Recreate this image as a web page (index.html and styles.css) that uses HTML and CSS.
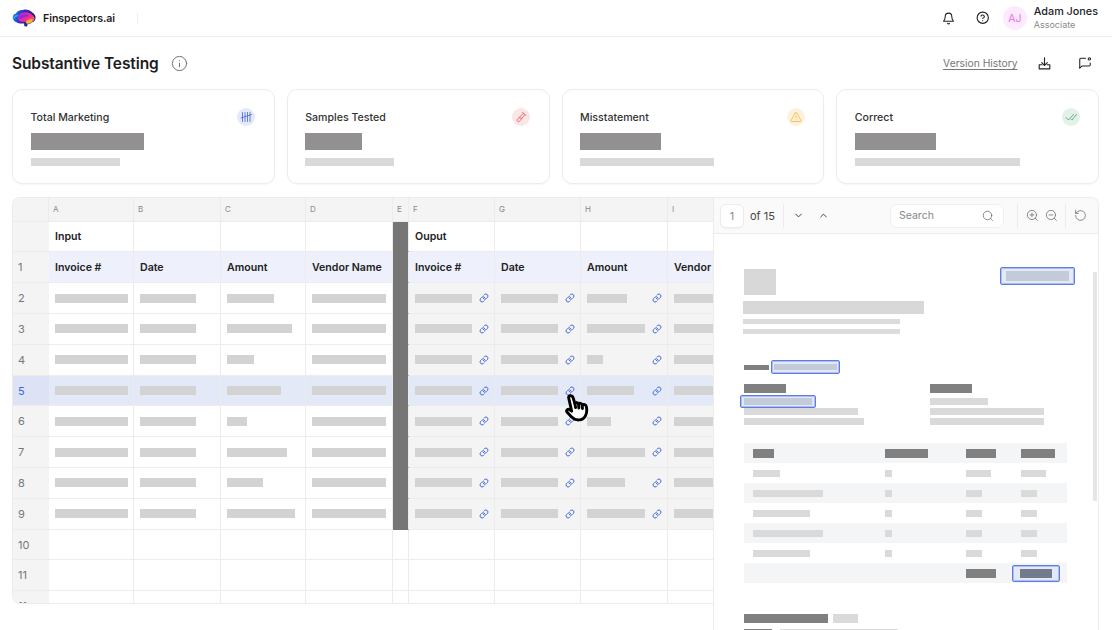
FILE: index.html
```html
<!DOCTYPE html>
<html lang="en">
<head>
<meta charset="utf-8">
<title>Substantive Testing</title>
<link rel="stylesheet" href="styles.css">
</head>
<body>
<svg class="sprite" aria-hidden="true">
  <symbol id="link" viewBox="0 0 24 24"><path d="M10 13a5 5 0 0 0 7.5.5l3-3a5 5 0 0 0-7-7l-1.7 1.7"/><path d="M14 11a5 5 0 0 0-7.5-.5l-3 3a5 5 0 0 0 7 7l1.7-1.7"/></symbol>
</svg>
<header class="topbar">
  <svg class="logo" viewBox="0 0 24 18" aria-hidden="true">
    <defs>
      <linearGradient id="lg1" x1="0" y1="0" x2="1" y2="0.3"><stop offset="0" stop-color="#1f8cf0"/><stop offset=".45" stop-color="#3a2fc4"/><stop offset="1" stop-color="#241a6e"/></linearGradient>
      <linearGradient id="lg2" x1="0" y1="0" x2="1" y2="1"><stop offset="0" stop-color="#c026d3"/><stop offset=".55" stop-color="#f0279a"/><stop offset="1" stop-color="#f79a1e"/></linearGradient>
    </defs>
    <path fill="url(#lg1)" d="M1 9.5C.2 7 2 5 4 4.6 5 2 8 .6 11 1c3-1 7 0 9 2.200 2.500 1.300 4 3.800 3.500 6.300-.4 2.200-2 3.500-4 4-.8 1.300-2.500 1.800-4 1.700l-.4 2.200-2.700-.2-.4-2.600C9 14.600 6 14.400 4.500 13.200 2.800 13 1.500 11.500 1 9.500Z"/>
    <path fill="url(#lg2)" d="M7 6.500C9 3.500 14 2.500 17.500 4c2.500 1 4.500 3 5.200 5.500-.6 2.300-2.200 3.600-4.200 4-1.600-.6-3-1-5-.8-2.500.3-5 .2-6.500-1.200C6 10 6 8 7 6.500Z"/>
    <path fill="#7c2fe0" d="M7.500 8c2-2.500 5.500-3 8-2 1.200.5.800 1.500-.2 1.500-2.300-.3-4.300.4-5.800 2-.8 1.200-2.800-.3-2-1.500Z"/>
    <path fill="#f9b233" d="M14 13c1-2 3.500-3 6-2.500.8.300.5 1-.3 2.400-.8 1.300-2.500 1.900-4.200 1.800-1 0-2-.8-1.500-1.700Z"/>
    <path fill="#18a5f5" d="M1.200 8.500C2 6.500 4 5.500 6 6c.8.300.4 1.300-.4 1.400-1.600.2-2.400 1-3 2.300-.4.600-1.600-.4-1.400-1.200Z"/>
  </svg>
  <span class="brand">Finspectors.ai</span>
  <span class="brand-rule"></span>
  <div class="top-actions">
    <svg class="ico ico-bell" viewBox="0 0 24 24"><path d="M6 8a6 6 0 0 1 12 0c0 7 3 8 3 9H3c0-1 3-2 3-9"/><path d="M10.300 21a2 2 0 0 0 3.400 0"/></svg>
    <svg class="ico ico-help" viewBox="0 0 24 24"><circle cx="12" cy="12" r="10"/><path d="M9 9a3 3 0 0 1 5.800 1c0 2-3 3-3 3"/><path d="M12 17h.01"/></svg>
    <div class="avatar">AJ</div>
    <div class="user">
      <div class="user-name">Adam Jones</div>
      <div class="user-role">Associate</div>
    </div>
  </div>
</header>

<main class="page">
  <div class="title-row">
    <h1 class="title">Substantive Testing</h1>
    <svg class="ico ico-info" viewBox="0 0 24 24"><circle cx="12" cy="12" r="10"/><path d="M12 16.500v-5"/><path d="M12 8h.01"/></svg>
    <a class="history">Version History</a>
    <svg class="ico ico-dl" viewBox="0 0 24 24"><path d="M12 3v12"/><path d="m7.500 10.500 4.500 4.500 4.500-4.500"/><path d="M8 14H3.500v6.500h17V14H16"/></svg>
    <svg class="ico ico-msg" viewBox="0 0 24 24"><path d="M13 4H5a2 2 0 0 0-2 2v15l4-4h12a2 2 0 0 0 2-2v-3"/><circle cx="19.500" cy="5" r="2"/></svg>
  </div>

  <section class="cards">
    <article class="card">
      <div class="card-top"><span class="card-label">Total Marketing</span>
        <span class="badge badge-blue"><svg viewBox="0 0 24 24"><path d="M5 3v18M10 3v18M15 3v18M20 3v18M2 14 23 7"/></svg></span></div>
      <div class="val" style="width:113px"></div><div class="sub" style="width:89px"></div>
    </article>
    <article class="card">
      <div class="card-top"><span class="card-label">Samples Tested</span>
        <span class="badge badge-red"><svg viewBox="0 0 24 24"><path d="m15 2.500 6.500 6.500"/><path d="M17 4.500 4.500 17a3 3 0 0 0 4 4L19.500 7.500"/><path d="m8.500 13 5 2"/></svg></span></div>
      <div class="val" style="width:57px"></div><div class="sub" style="width:89px"></div>
    </article>
    <article class="card">
      <div class="card-top"><span class="card-label">Misstatement</span>
        <span class="badge badge-yellow"><svg viewBox="0 0 24 24"><path d="M10.300 4 2.500 18a2 2 0 0 0 1.700 3h15.600a2 2 0 0 0 1.700-3L13.700 4a2 2 0 0 0-3.400 0Z"/><path d="M12 9.500v4.500"/><path d="M12 17.500h.01"/></svg></span></div>
      <div class="val" style="width:81px"></div><div class="sub" style="width:134px"></div>
    </article>
    <article class="card">
      <div class="card-top"><span class="card-label">Correct</span>
        <span class="badge badge-green"><svg viewBox="0 0 24 24"><path d="m2 13 5 5L17 7"/><path d="m13 17 1 1L23 7"/></svg></span></div>
      <div class="val" style="width:81px"></div><div class="sub" style="width:165px"></div>
    </article>
  </section>

  <section class="work">
    <div class="sheet">
      <div class="grid">
        <div class="c ch"></div><div class="c ch">A</div><div class="c ch">B</div><div class="c ch">C</div><div class="c ch">D</div><div class="c ch">E</div><div class="c ch">F</div><div class="c ch">G</div><div class="c ch">H</div><div class="c ch">I</div>

        <div class="c rh"></div><div class="c b">Input</div><div class="c"></div><div class="c"></div><div class="c"></div><div class="c dark"></div><div class="c b">Ouput</div><div class="c"></div><div class="c"></div><div class="c"></div>

        <div class="c rh">1</div><div class="c b hd">Invoice #</div><div class="c b hd">Date</div><div class="c b hd">Amount</div><div class="c b hd">Vendor Name</div><div class="c dark"></div><div class="c b hd">Invoice #</div><div class="c b hd">Date</div><div class="c b hd">Amount</div><div class="c b hd">Vendor Name</div>

        <div class="c rh">2</div><div class="c"><span class="sk" style="width:73px"></span></div><div class="c"><span class="sk" style="width:56px"></span></div><div class="c"><span class="sk" style="width:47px"></span></div><div class="c"><span class="sk" style="width:74px"></span></div><div class="c dark"></div><div class="c out"><span class="sk" style="width:57px"></span><svg class="lk"><use href="#link"/></svg></div><div class="c out"><span class="sk" style="width:57px"></span><svg class="lk"><use href="#link"/></svg></div><div class="c out"><span class="sk" style="width:40px"></span><svg class="lk"><use href="#link"/></svg></div><div class="c out"><span class="sk" style="width:74px"></span></div>

        <div class="c rh">3</div><div class="c"><span class="sk" style="width:73px"></span></div><div class="c"><span class="sk" style="width:56px"></span></div><div class="c"><span class="sk" style="width:65px"></span></div><div class="c"><span class="sk" style="width:74px"></span></div><div class="c dark"></div><div class="c out"><span class="sk" style="width:57px"></span><svg class="lk"><use href="#link"/></svg></div><div class="c out"><span class="sk" style="width:57px"></span><svg class="lk"><use href="#link"/></svg></div><div class="c out"><span class="sk" style="width:58px"></span><svg class="lk"><use href="#link"/></svg></div><div class="c out"><span class="sk" style="width:74px"></span></div>

        <div class="c rh">4</div><div class="c"><span class="sk" style="width:73px"></span></div><div class="c"><span class="sk" style="width:56px"></span></div><div class="c"><span class="sk" style="width:27px"></span></div><div class="c"><span class="sk" style="width:74px"></span></div><div class="c dark"></div><div class="c out"><span class="sk" style="width:57px"></span><svg class="lk"><use href="#link"/></svg></div><div class="c out"><span class="sk" style="width:57px"></span><svg class="lk"><use href="#link"/></svg></div><div class="c out"><span class="sk" style="width:16px"></span><svg class="lk"><use href="#link"/></svg></div><div class="c out"><span class="sk" style="width:74px"></span></div>

        <div class="c rh sel-h">5</div><div class="c sel"><span class="sk" style="width:73px"></span></div><div class="c sel"><span class="sk" style="width:56px"></span></div><div class="c sel"><span class="sk" style="width:54px"></span></div><div class="c sel"><span class="sk" style="width:74px"></span></div><div class="c dark"></div><div class="c out sel"><span class="sk" style="width:57px"></span><svg class="lk"><use href="#link"/></svg></div><div class="c out sel"><span class="sk" style="width:57px"></span><svg class="lk"><use href="#link"/></svg></div><div class="c out sel"><span class="sk" style="width:47px"></span><svg class="lk"><use href="#link"/></svg></div><div class="c out sel"><span class="sk" style="width:74px"></span></div>

        <div class="c rh">6</div><div class="c"><span class="sk" style="width:73px"></span></div><div class="c"><span class="sk" style="width:56px"></span></div><div class="c"><span class="sk" style="width:20px"></span></div><div class="c"><span class="sk" style="width:74px"></span></div><div class="c dark"></div><div class="c out"><span class="sk" style="width:57px"></span><svg class="lk"><use href="#link"/></svg></div><div class="c out"><span class="sk" style="width:57px"></span><svg class="lk"><use href="#link"/></svg></div><div class="c out"><span class="sk" style="width:24px"></span><svg class="lk"><use href="#link"/></svg></div><div class="c out"><span class="sk" style="width:74px"></span></div>

        <div class="c rh">7</div><div class="c"><span class="sk" style="width:73px"></span></div><div class="c"><span class="sk" style="width:56px"></span></div><div class="c"><span class="sk" style="width:60px"></span></div><div class="c"><span class="sk" style="width:74px"></span></div><div class="c dark"></div><div class="c out"><span class="sk" style="width:57px"></span><svg class="lk"><use href="#link"/></svg></div><div class="c out"><span class="sk" style="width:57px"></span><svg class="lk"><use href="#link"/></svg></div><div class="c out"><span class="sk" style="width:58px"></span><svg class="lk"><use href="#link"/></svg></div><div class="c out"><span class="sk" style="width:74px"></span></div>

        <div class="c rh">8</div><div class="c"><span class="sk" style="width:73px"></span></div><div class="c"><span class="sk" style="width:56px"></span></div><div class="c"><span class="sk" style="width:36px"></span></div><div class="c"><span class="sk" style="width:74px"></span></div><div class="c dark"></div><div class="c out"><span class="sk" style="width:57px"></span><svg class="lk"><use href="#link"/></svg></div><div class="c out"><span class="sk" style="width:57px"></span><svg class="lk"><use href="#link"/></svg></div><div class="c out"><span class="sk" style="width:38px"></span><svg class="lk"><use href="#link"/></svg></div><div class="c out"><span class="sk" style="width:74px"></span></div>

        <div class="c rh">9</div><div class="c"><span class="sk" style="width:73px"></span></div><div class="c"><span class="sk" style="width:56px"></span></div><div class="c"><span class="sk" style="width:68px"></span></div><div class="c"><span class="sk" style="width:74px"></span></div><div class="c dark"></div><div class="c out"><span class="sk" style="width:57px"></span><svg class="lk"><use href="#link"/></svg></div><div class="c out"><span class="sk" style="width:57px"></span><svg class="lk"><use href="#link"/></svg></div><div class="c out"><span class="sk" style="width:58px"></span><svg class="lk"><use href="#link"/></svg></div><div class="c out"><span class="sk" style="width:74px"></span></div>

        <div class="c rh">10</div><div class="c"></div><div class="c"></div><div class="c"></div><div class="c"></div><div class="c"></div><div class="c"></div><div class="c"></div><div class="c"></div><div class="c"></div>
        <div class="c rh">11</div><div class="c"></div><div class="c"></div><div class="c"></div><div class="c"></div><div class="c"></div><div class="c"></div><div class="c"></div><div class="c"></div><div class="c"></div>
        <div class="c rh">11</div><div class="c"></div><div class="c"></div><div class="c"></div><div class="c"></div><div class="c"></div><div class="c"></div><div class="c"></div><div class="c"></div><div class="c"></div>
      </div>
      <svg class="hand" viewBox="0 0 26 27" aria-hidden="true"><path d="M3.500 3.500c-.3-2.200 3.500-2.600 4.200-.3l1.800 6c1-1.500 3.100-1.100 3.500.6 1-1.400 3.200-1 3.600.9 1.300-1.100 3.600-.4 4 1.600.7 3.300.4 6-.8 8.500-1.100 2.300-3.300 4-6.300 4.200-3 .2-5.300-.8-7.400-3l-4-4.300c-1.500-1.700.7-3.800 2.500-2.500l1.800 1.300Z"/><path d="M9.500 9.200l.7 3.800M13 9.800l.4 3.700M16.600 10.700l.2 3.300"/></svg>
    </div>

    <aside class="viewer">
      <div class="toolbar">
        <div class="page-box">1</div>
        <span class="page-of">of 15</span>
        <span class="tb-rule rule-a"></span>
        <svg class="ico tb-ico chev-d" viewBox="0 0 24 24"><path d="m6 9 6 6 6-6"/></svg>
        <svg class="ico tb-ico chev-u" viewBox="0 0 24 24"><path d="m18 15-6-6-6 6"/></svg>
        <div class="search"><span>Search</span><svg class="ico" viewBox="0 0 24 24"><circle cx="11" cy="11" r="8.500"/><path d="m21 21-3.800-3.800"/></svg></div>
        <span class="tb-rule rule-b"></span>
        <svg class="ico tb-gray zoom-in" viewBox="0 0 24 24"><circle cx="11" cy="11" r="8.500"/><path d="m21 21-3.800-3.800M11 7.500v7M7.500 11h7"/></svg>
        <svg class="ico tb-gray zoom-out" viewBox="0 0 24 24"><circle cx="11" cy="11" r="8.500"/><path d="m21 21-3.800-3.800M7.500 11h7"/></svg>
        <span class="tb-rule rule-c"></span>
        <svg class="ico tb-gray reset" viewBox="0 0 24 24"><path d="M3 12a9 9 0 1 0 3-6.700L3 8"/><path d="M3 3v5h5"/></svg>
      </div>
      <div class="doc">
        <div class="doc-head">
          <div class="doc-brand">
            <div class="d-logo"></div>
            <div class="d-title"></div>
            <div class="d-line"></div>
            <div class="d-line"></div>
          </div>
          <div class="hl hl-inv"><span class="hl-bar"></span></div>
        </div>
        <div class="ref-row">
          <span class="d-key"></span>
          <div class="hl hl-ref"><span class="hl-bar"></span></div>
        </div>
        <div class="parties">
          <div class="party">
            <div class="d-dark"></div>
            <div class="hl hl-name"><span class="hl-bar"></span></div>
            <div class="d-row" style="width:114px"></div>
            <div class="d-row" style="width:120px"></div>
          </div>
          <div class="party">
            <div class="d-dark"></div>
            <div class="d-row first" style="width:58px"></div>
            <div class="d-row" style="width:114px"></div>
            <div class="d-row" style="width:114px"></div>
          </div>
        </div>
        <div class="items">
          <div class="it shade"><span class="dk" style="width:21px"></span><span class="dk" style="width:43px"></span><span class="dk" style="width:30px"></span><span class="dk" style="width:34px"></span></div>
          <div class="it"><span class="lt" style="width:27px"></span><span class="lt" style="width:7px"></span><span class="lt" style="width:25px"></span><span class="lt" style="width:25px"></span></div>
          <div class="it shade"><span class="lt" style="width:70px"></span><span class="lt" style="width:7px"></span><span class="lt" style="width:16px"></span><span class="lt" style="width:16px"></span></div>
          <div class="it"><span class="lt" style="width:57px"></span><span class="lt" style="width:7px"></span><span class="lt" style="width:16px"></span><span class="lt" style="width:16px"></span></div>
          <div class="it shade"><span class="lt" style="width:70px"></span><span class="lt" style="width:7px"></span><span class="lt" style="width:16px"></span><span class="lt" style="width:16px"></span></div>
          <div class="it"><span class="lt" style="width:57px"></span><span class="lt" style="width:7px"></span><span class="lt" style="width:16px"></span><span class="lt" style="width:16px"></span></div>
          <div class="it shade"><span></span><span></span><span class="dk" style="width:30px"></span><span class="hl hl-total"><span class="hl-bar"></span></span></div>
        </div>
        <div class="foot-row"><span class="dk foot-a"></span><span class="lt foot-b"></span></div>
        <div class="foot-row next"><span class="dk foot-c"></span><span class="lt foot-d"></span></div>
      </div>
      <div class="scroll"></div>
    </aside>
  </section>
</main>
</body>
</html>
```
FILE: styles.css
```css
* { box-sizing: border-box; }
html, body { margin: 0; height: 630px; overflow: hidden; background: #fff; }
body { font-family: Inter, "Liberation Sans", sans-serif; color: #1d1d1f; width: 1112px; }
.sprite { display: none; }
.ico { fill: none; stroke: currentColor; stroke-width: 2; stroke-linecap: round; stroke-linejoin: round; flex: none; }

.topbar { height: 37px; border-bottom: 1px solid #ececec; display: flex; align-items: center; padding: 0 14px 0 12px; }
.logo { width: 24px; height: 18px; flex: none; }
.brand { font-size: 10.600px; font-weight: 600; margin-left: 7px; letter-spacing: -.05px; }
.brand-rule { width: 1px; height: 11px; background: #eee; margin-left: 22px; }
.top-actions { margin-left: auto; display: flex; align-items: center; }
.ico-bell { width: 13px; height: 13px; color: #222; margin-right: 21.500px; }
.ico-help { width: 13.500px; height: 13.500px; color: #222; margin-right: 13px; }
.avatar { width: 24px; height: 24px; border-radius: 50%; background: #fdebfd; color: #f06cf0; font-size: 10.500px; display: flex; align-items: center; justify-content: center; margin-right: 7px; }
.user { padding-bottom: 1px; }
.user-name { font-size: 10.800px; font-weight: 500; line-height: 12px; }
.user-role { font-size: 9px; color: #8a8a8a; line-height: 11px; margin-top: 1px; }

.page { padding: 0 13px 0 12px; }
.title-row { height: 52px; display: flex; align-items: center; }
.title { font-size: 15.500px; font-weight: 600; margin: 0; letter-spacing: -.1px; }
.ico-info { width: 17px; height: 17px; color: #666; stroke-width: 1.300; margin-left: 12.500px; }
.history { margin-left: auto; font-size: 10.300px; color: #777; text-decoration: underline; text-underline-offset: 2px; }
.ico-dl { width: 15px; height: 15px; color: #222; stroke-width: 1.800; margin-left: 19.500px; }
.ico-msg { width: 14px; height: 14px; color: #222; stroke-width: 1.800; margin-left: 25.500px; margin-right: 7.500px; }

.cards { display: grid; grid-template-columns: repeat(4, 1fr); gap: 12px; }
.card { height: 95px; border: 1px solid #ececec; border-radius: 10px; padding: 17px 18.500px 0 17.500px; box-shadow: 0 1px 2px rgba(0,0,0,.04); }
.card-top { display: flex; justify-content: space-between; align-items: center; height: 19px; margin-bottom: 7px; }
.card-label { font-size: 10.600px; color: #333; font-weight: 450; padding-top: 1px; }
.badge { width: 18px; height: 18px; border-radius: 50%; display: flex; align-items: center; justify-content: center; }
.badge svg { width: 12px; height: 12px; fill: none; stroke: currentColor; stroke-width: 1.600; stroke-linecap: round; stroke-linejoin: round; }
.badge-blue { background: #e4e9fa; color: #3f63dd; }
.badge-red { background: #fbe6e6; color: #e8505b; }
.badge-yellow { background: #fdf0dc; color: #f7b731; }
.badge-green { background: #e3f1e9; color: #3f9c6c; }
.val { height: 17px; background: #929090; }
.sub { height: 8px; background: #d9d9d9; margin-top: 8px; }

.work { display: flex; margin-top: 13px; align-items: flex-start; }
.sheet { width: 702px; height: 407px; flex: none; border: 1px solid #ececec; border-right: 0; border-radius: 8px 0 0 8px; overflow: hidden; position: relative; }
.grid { display: grid; grid-template-columns: 36px 85px 87px 85px 87px 16px 86px 86px 87px 46px; grid-template-rows: 23.700px repeat(13, 30.800px); }
.c { border-right: 1px solid #ececec; border-bottom: 1px solid #ececec; display: flex; align-items: center; padding-left: 6px; overflow: hidden; white-space: nowrap; min-width: 0; }
.ch { background: #f4f4f4; font-size: 8px; color: #888; padding-left: 4px; }
.rh { background: #f4f4f4; font-size: 11px; color: #777; border-right: 0; padding-left: 5px; }
.b { font-size: 10.600px; font-weight: 600; color: #222; }
.hd { background: #eef1fb; }
.dark { background: #767676; border-bottom-color: #767676; }
.out { background: #f4f4f4; justify-content: space-between; padding-right: 5px; }
.sel { background: #e4e9f7; }
.sel-h { background: #dde3f5; color: #3f63dd; }
.sk { height: 9px; background: #d3d3d3; flex: none; }
.lk { width: 10px; height: 10px; flex: none; fill: none; stroke: #3f63dd; stroke-width: 2.300; stroke-linecap: round; stroke-linejoin: round; }
.hand { position: absolute; left: 552px; top: 196px; width: 27px; height: 28px; fill: #fff; stroke: #000; stroke-width: 2.800; stroke-linejoin: round; stroke-linecap: round; }

.viewer { width: 386px; height: 440px; flex: none; margin-left: -1px; border: 1px solid #ececec; border-bottom: 0; border-radius: 0 8px 0 0; background: #fff; position: relative; overflow: hidden; }
.toolbar { height: 36px; background: #fafafa; border-bottom: 1px solid #ececec; display: flex; align-items: center; padding-left: 6px; }
.page-box { width: 24px; height: 24px; background: #fff; border: 1px solid #ececec; border-radius: 6px; font-size: 11px; color: #888; display: flex; align-items: center; justify-content: center; box-shadow: 0 1px 1px rgba(0,0,0,.04); }
.page-of { font-size: 11px; color: #444; margin-left: 6px; width: 33px; }
.tb-rule { width: 1px; height: 24px; background: #ececec; flex: none; }
.tb-ico { width: 11px; height: 11px; color: #333; }
.chev-d { margin-left: 9px; }
.chev-u { margin-left: 14px; }
.search { margin-left: 61px; width: 114px; height: 24px; border: 1px solid #efefef; border-radius: 7px; background: #fff; display: flex; align-items: center; justify-content: space-between; padding: 0 9px 0 8px; font-size: 10.500px; color: #888; }
.search svg { width: 12px; height: 12px; stroke-width: 1.500; color: #666; }
.rule-b { margin-left: 13px; }
.tb-gray { width: 13px; height: 13px; color: #777; stroke-width: 1.600; }
.zoom-in { margin-left: 8px; }
.zoom-out { margin-left: 6px; }
.rule-c { margin-left: 7px; }
.reset { margin-left: 8px; }

.doc { padding: 35px 23px 0 29px; }
.doc-head { display: flex; justify-content: space-between; align-items: flex-start; }
.d-logo { width: 32px; height: 26px; background: #d8d8d8; margin-left: 1px; }
.d-title { width: 181px; height: 13px; background: #d8d8d8; margin-top: 6px; }
.d-line { width: 157px; height: 5px; background: #dcdcdc; margin-top: 5px; }
.hl { display: flex; align-items: center; justify-content: center; border: 1px solid #5f7de5; box-shadow: inset 0 0 0 1px rgba(106,135,230,.45); border-radius: 2px; background: #e4e9f7; }
.hl-bar { display: block; flex: 1; background: #c3cad9; align-self: stretch; }
.hl-inv { width: 75px; height: 18px; margin-top: -2px; padding: 3px 5px; }
.ref-row { display: flex; align-items: center; gap: 2px; margin-top: 26px; padding-left: 1px; }
.d-key { width: 25px; height: 5px; background: #808080; }
.hl-ref { width: 69px; height: 14px; padding: 3px 2px; }
.parties { display: grid; grid-template-columns: 186px 1fr; margin-top: 10px; padding-left: 1px; }
.d-dark { width: 42px; height: 9px; background: #808080; }
.hl-name { width: 76px; height: 13px; margin: 2px 0 0 -4px; padding: 2px 3px; }
.d-row { height: 7px; background: #dadada; margin-top: 3px; }
.hl-name + .d-row { margin-top: 0; }
.d-row.first { margin-top: 5px; }
.items { width: 323px; margin: 18px 0 0 1px; }
.it { height: 20px; display: grid; grid-template-columns: 132px 80.500px 55px 1fr; align-items: center; padding-left: 9px; }
.shade { background: #f4f5f7; }
.dk { display: block; height: 9px; background: #808080; }
.lt { display: block; height: 7px; background: #dadada; }
.hl-total { width: 48px; height: 17px; margin-left: -8.500px; padding: 3px 7px; position: relative; }
.hl-total .hl-bar { background: #737a8c; }
.foot-row { display: flex; gap: 5px; margin: 31px 0 0 1px; }
.foot-a { width: 84px; }
.foot-b { width: 25px; height: 9px; }
.foot-row.next { margin-top: 6px; gap: 8px; }
.foot-c { width: 28px; }
.foot-d { width: 118px; height: 7px; }
.scroll { position: absolute; right: 1px; top: 74px; width: 4px; height: 229px; background: #e6e6e6; }
```
